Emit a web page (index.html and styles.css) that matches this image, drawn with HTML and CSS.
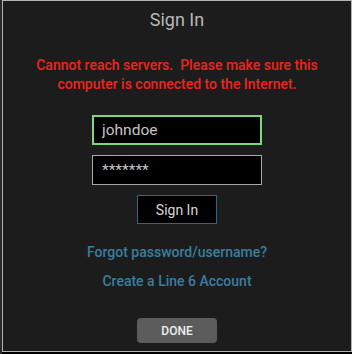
FILE: index.html
```html
<!DOCTYPE html>
<html lang="en">
<head>
    <meta charset="UTF-8">
    <meta name="viewport" content="width=device-width, initial-scale=1.0">
    <title>Sign In</title>
    <link rel="stylesheet" href="styles.css">
</head>
<body>
    <div class="dialog">
        <h1 class="title">Sign In</h1>

        <p class="error">Cannot reach servers.&nbsp; Please make sure this<br>computer is connected to the Internet.</p>

        <form class="login" onsubmit="return false;">
            <input type="text" class="field active" value="johndoe">
            <input type="text" class="field" value="*******">
            <button class="signin">Sign In</button>
        </form>

        <div class="links">
            <a href="#">Forgot password/username?</a>
            <a href="#">Create a Line 6 Account</a>
        </div>

        <button class="done">DONE</button>
    </div>
</body>
</html>
```

FILE: styles.css
```css
:root {
    --background: #1c1c1c;
    --frame: #b4b4b4;
    --error: #f0241c;
    --link: #3a7ea0;
}

body {
    margin: 0;
    background: #000;
    font-family: Roboto, 'Noto Sans', sans-serif;
    width: 352px;
    height: 354px;
    border-left: 2px solid #2a2a2a;
    box-sizing: border-box;
}

.dialog {
    width: 350px;
    height: 352px;
    box-sizing: border-box;
    border: 1px solid var(--frame);
    background: var(--background);
    display: flex;
    flex-direction: column;
    align-items: center;
}

.title {
    margin: 7px 0 0;
    font-size: 18px;
    font-weight: 400;
    line-height: 24px;
    color: #b8b8b8;
}

.error {
    margin: 24px 0 0;
    font-size: 14px;
    font-weight: 500;
    line-height: 19px;
    text-align: center;
    color: var(--error);
}

.login {
    margin-top: 21px;
    display: flex;
    flex-direction: column;
    align-items: center;
}

.field {
    width: 170px;
    height: 30px;
    box-sizing: border-box;
    background: #000;
    border: 1px solid #a8a8a8;
    color: #c4c4c4;
    font-family: Roboto, sans-serif;
    font-size: 15.5px;
    font-weight: 400;
    padding: 0 9px;
    margin: 0 0 10px;
    outline: none;
}

.field.active {
    border: 2px solid #7ed67e;
    padding: 0 8px;
}

.signin {
    width: 80px;
    height: 29px;
    background: #000;
    border: 1px solid #2a6a88;
    color: #d8d8d8;
    font-family: Roboto, sans-serif;
    font-size: 14px;
    font-weight: 400;
    cursor: pointer;
}

.links {
    margin-top: 19px;
    display: flex;
    flex-direction: column;
    align-items: center;
    gap: 10px;
}

.links a {
    color: var(--link);
    text-decoration: none;
    font-size: 14px;
    font-weight: 500;
    line-height: 19px;
}

.done {
    margin-top: 27px;
    width: 80px;
    height: 25px;
    border: none;
    border-radius: 4px;
    background: #5c5c5c;
    color: #f0f0f0;
    font-family: Roboto, sans-serif;
    font-size: 12px;
    font-weight: 500;
    cursor: pointer;
}
```
